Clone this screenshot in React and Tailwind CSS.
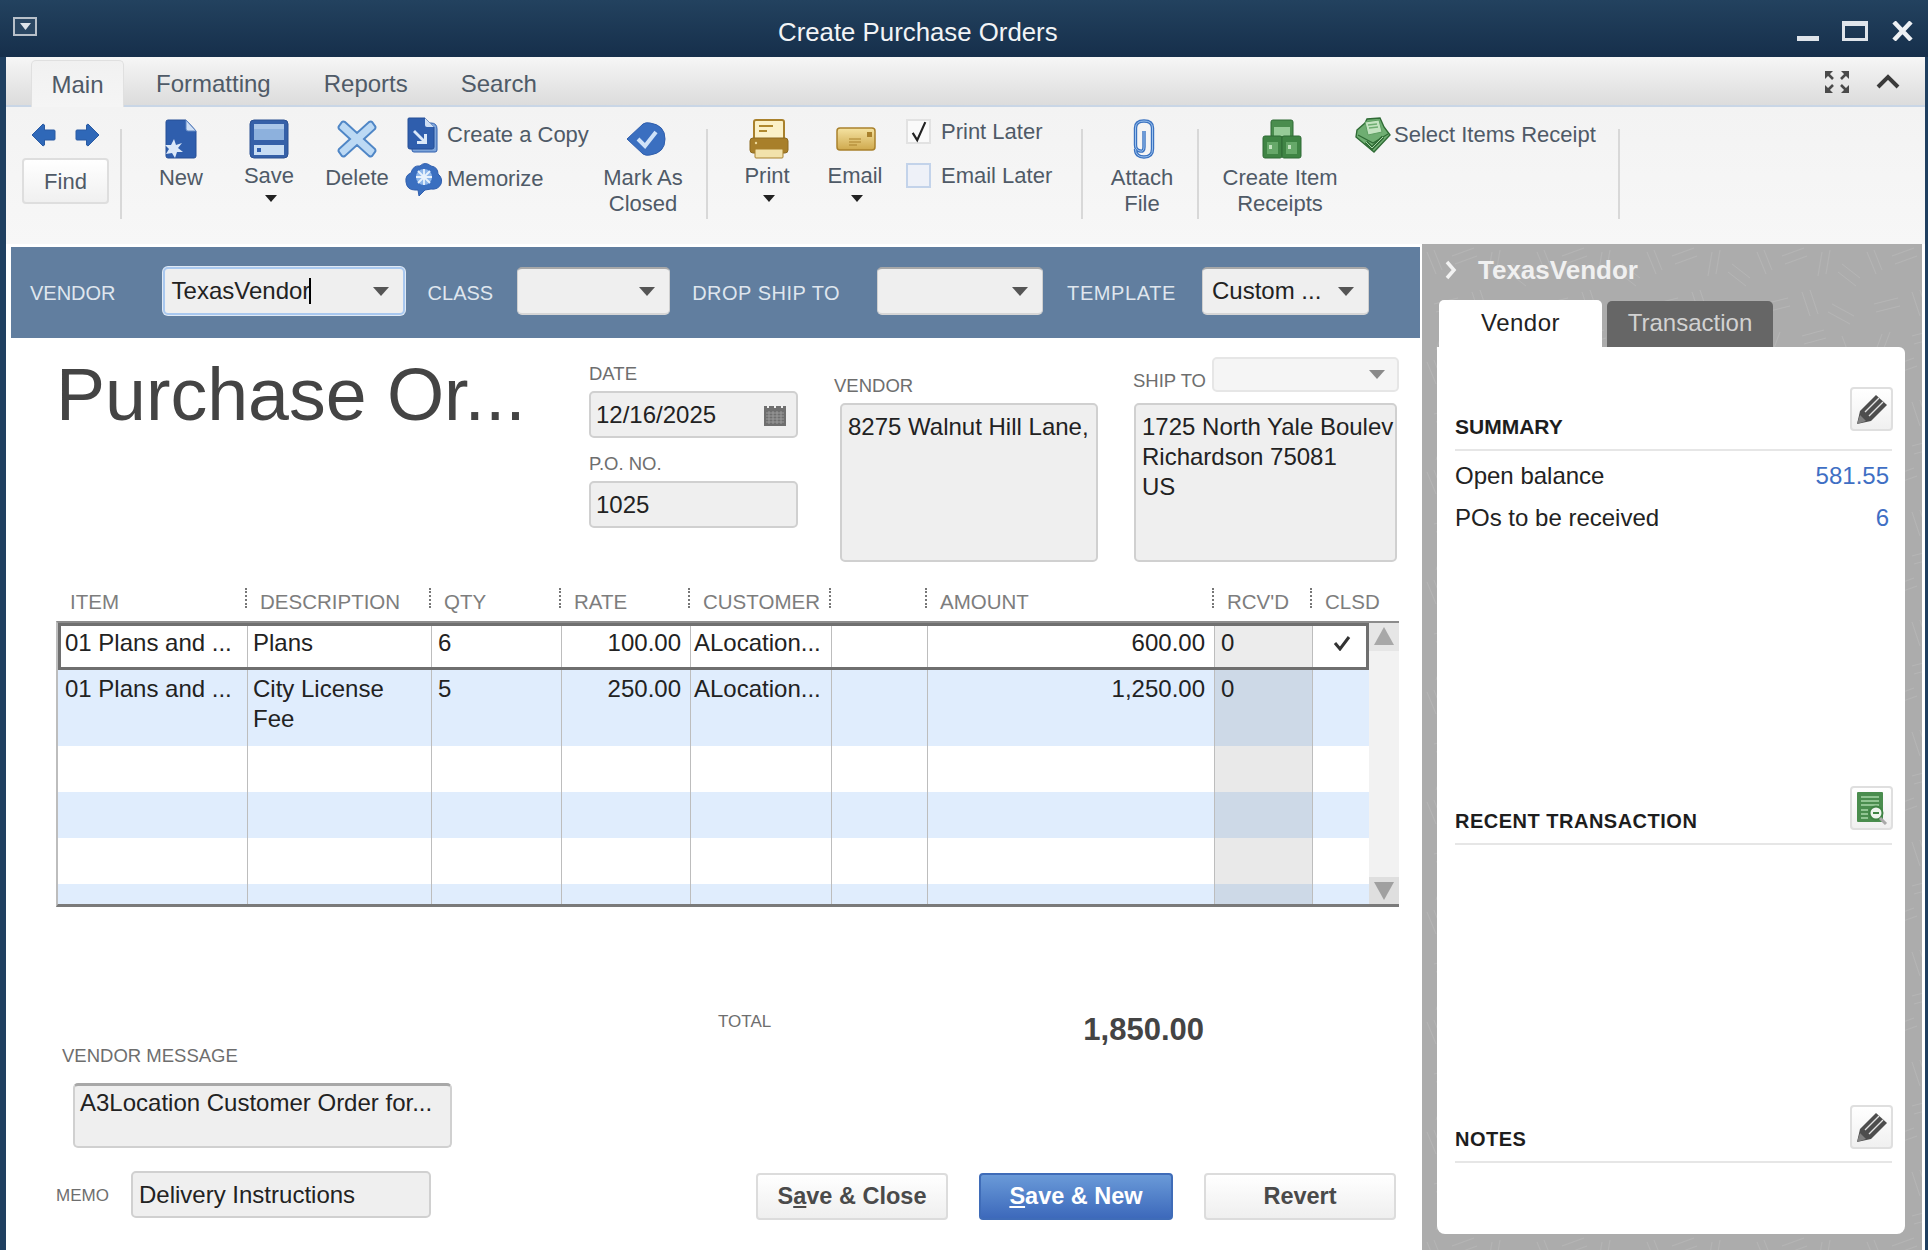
import React from "react";

/* ----------------------------- ICONS -------------------------------- */
const Tri = ({ className = "w-[16px] h-[9px]", fill = "#555" }) => (
  <svg viewBox="0 0 16 9" className={className} preserveAspectRatio="none">
    <polygon points="0,0 16,0 8,9" fill={fill} />
  </svg>
);

const ArrowIcon = ({ flip }) => (
  <svg viewBox="0 0 25 24" className={`w-[25px] h-[24px] ${flip ? "-scale-x-100" : ""}`}>
    <path d="M1 12 L12 1 L13.5 2 V7 H23 Q24 7 24 8 V16 Q24 17 23 17 H13.5 V22 L12 23 Z" fill="#2f68b8" stroke="#2a5ba3" strokeWidth="1" />
  </svg>
);

const NewIcon = () => (
  <svg viewBox="0 0 32 40" className="w-[32px] h-[40px]">
    <path d="M3 1 H21 L31 12 V37 Q31 39 29 39 H3 Q1 39 1 37 V3 Q1 1 3 1 Z" fill="#2f5ead" stroke="#274f96" />
    <path d="M21 1 L31 12 H23 Q21 12 21 10 Z" fill="#cfdff4" stroke="#5f86c4" />
    <path d="M9 20 L11 26 L17 24 L13 29 L18 33 L12 33 L10 39 L7 34 L1 35 L4 30 L0 26 L6 26 Z" fill="#dbe8f8" />
  </svg>
);

const SaveIcon = () => (
  <svg viewBox="0 0 40 40" className="w-[40px] h-[40px]">
    <rect x="1" y="1" width="38" height="38" rx="4" fill="#3560a8" stroke="#2b5092" />
    <rect x="5" y="5" width="30" height="16" fill="#8db1dd" />
    <rect x="5" y="5" width="30" height="5" fill="#a9c6e8" />
    <rect x="5" y="26" width="30" height="10" fill="#c7dcf3" />
    <rect x="8" y="29" width="4" height="4" fill="#2f5ead" />
  </svg>
);

const DeleteIcon = () => (
  <svg viewBox="0 0 40 38" className="w-[40px] h-[38px]">
    <path d="M8 2 L20 13 L32 2 Q34 1 35 2 L38 6 Q39 7 38 9 L27 19 L38 29 Q39 31 38 32 L35 36 Q34 37 32 36 L20 25 L8 36 Q6 37 5 36 L2 32 Q1 31 2 29 L13 19 L2 9 Q1 7 2 6 L5 2 Q6 1 8 2 Z" fill="#bcd9f4" stroke="#4f86c6" strokeWidth="2" />
  </svg>
);

const CopyIcon = () => (
  <svg viewBox="0 0 32 36" className="w-[32px] h-[36px]">
    <path d="M5 6 H24 Q30 6 30 12 V33 Q30 35 28 35 H7 Q5 35 5 33 Z" fill="#7ea5da" stroke="#2f5ead" />
    <path d="M2 1 H18 L27 10 V30 Q27 32 25 32 H3 Q1 32 1 30 V2 Q1 1 2 1 Z" fill="#2f5ead" stroke="#274f96" />
    <path d="M18 1 L27 10 H20 Q18 10 18 8 Z" fill="#cfdff4" />
    <path d="M8 13 L17 22 V17 H20 V27 H10 V24 H15 L6 15 Z" fill="#dbe8f8" />
  </svg>
);

const MemorizeIcon = () => (
  <svg viewBox="0 0 38 36" className="w-[38px] h-[36px]">
    <path d="M10 29 Q2 29 1 21 Q0 14 6 12 Q8 4 15 5 Q20 0 26 5 Q33 6 33 13 Q38 17 36 23 Q33 29 26 28 L20 29 L14 35 L13 29 Z" fill="#3a6fc0" stroke="#2f5ead" />
    <circle cx="19" cy="16" r="8" fill="#8db6ea" />
    <path d="M19 8 V24 M11 16 H27 M13 10 L25 22 M25 10 L13 22" stroke="#e8f2fc" strokeWidth="1.8" />
  </svg>
);

const MarkClosedIcon = () => (
  <svg viewBox="0 0 40 34" className="w-[40px] h-[34px]">
    <path d="M1 17 L17 2 Q20 0 24 1 Q39 3 39 17 Q39 31 24 33 Q20 34 17 32 Z" fill="#3a6fc0" stroke="#2f5ead" />
    <path d="M12 17 L19 24 L30 10" fill="none" stroke="#cfe2f8" strokeWidth="4" />
  </svg>
);

const PrintIcon = () => (
  <svg viewBox="0 0 40 40" className="w-[40px] h-[40px]">
    <rect x="5" y="1" width="30" height="22" rx="2" fill="#fbf1c8" stroke="#a9812c" strokeWidth="2" />
    <path d="M10 7 H24 M10 12 H18" stroke="#b0892f" strokeWidth="2" />
    <rect x="1" y="19" width="38" height="15" rx="3" fill="#a87f2a" stroke="#8d6a20" />
    <circle cx="7" cy="24" r="1.2" fill="#ecd99a" />
    <rect x="6" y="30" width="28" height="9" rx="1" fill="#f2e2ab" stroke="#a9812c" />
  </svg>
);

const EmailIcon = () => (
  <svg viewBox="0 0 40 24" className="w-[40px] h-[24px]">
    <defs>
      <linearGradient id="mailg" x1="0" y1="0" x2="0" y2="1">
        <stop offset="0" stopColor="#f5e3a2" />
        <stop offset="1" stopColor="#cfa94d" />
      </linearGradient>
    </defs>
    <rect x="1" y="1" width="38" height="22" rx="3" fill="url(#mailg)" stroke="#a9812c" strokeWidth="1.5" />
    <rect x="31" y="5" width="5" height="5" fill="#a9812c" />
    <path d="M13 12 H25 M13 15 H25 M13 18 H21" stroke="#a9812c" strokeWidth="1.2" />
  </svg>
);

const ClipIcon = () => (
  <svg viewBox="0 0 24 40" className="w-[24px] h-[40px]">
    <path d="M12 12 V28 Q12 33 8 32 Q3.5 31 3.5 26 V9 Q3.5 2 12 2 Q20.5 2 20.5 9 V30 Q20.5 38 12 38 Q3.5 38 3.5 30" fill="none" stroke="#3a72c0" strokeWidth="3.4" />
    <path d="M12 12 V28 Q12 33 8 32 Q3.5 31 3.5 26 V9 Q3.5 2 12 2 Q20.5 2 20.5 9 V30 Q20.5 38 12 38 Q3.5 38 3.5 30" fill="none" stroke="#9cc2ee" strokeWidth="1" />
  </svg>
);

const BoxesIcon = () => (
  <svg viewBox="0 0 40 40" className="w-[40px] h-[40px]">
    <rect x="9" y="1" width="22" height="18" rx="2" fill="#4a8d4e" stroke="#2f6b35" />
    <rect x="12" y="8" width="16" height="9" fill="#96cb97" />
    <rect x="1" y="17" width="19" height="22" rx="2" fill="#3f8444" stroke="#2f6b35" />
    <rect x="20" y="17" width="19" height="22" rx="2" fill="#3f8444" stroke="#2f6b35" />
    <rect x="5" y="23" width="11" height="12" fill="#66a869" />
    <rect x="24" y="23" width="11" height="12" fill="#66a869" />
    <rect x="7" y="26" width="3" height="4" fill="#c3e3c0" />
    <rect x="26" y="26" width="3" height="4" fill="#c3e3c0" />
  </svg>
);

const ReceiptIcon = () => (
  <svg viewBox="0 0 36 36" className="w-[36px] h-[36px]">
    <path d="M2 13 L10 6 L12 2 L25 1 L29 10 L35 18 L19 35 L1 20 Z" fill="#6fae72" stroke="#2f6b35" strokeWidth="1.4" />
    <path d="M10 5 L24 3 L27 15 L13 18 Z" fill="#c3e3c0" stroke="#5e9f62" />
    <path d="M13 8 L22 7 M14 11 L23 10" stroke="#6fae72" strokeWidth="1.4" />
    <path d="M3 18 L18 26 L33 17" fill="none" stroke="#2f6b35" strokeWidth="1.2" />
    <path d="M11 25 L17 31 L28 20" fill="none" stroke="#2f6b35" strokeWidth="3.4" />
    <path d="M11 25 L17 31 L28 20" fill="none" stroke="#a8d6a8" strokeWidth="1" />
  </svg>
);

const PencilIcon = () => (
  <svg viewBox="0 0 32 32" className="w-[32px] h-[32px]">
    <path d="M1 31 L4 18 L20 2 L31 12 L15 28 Z" fill="#4d4d4d" />
    <path d="M9 19 L23 5 M13 23 L27 9" stroke="#e4e4e4" strokeWidth="1.4" />
    <path d="M1 31 L4 22 L10 28 Z" fill="#808080" />
  </svg>
);

const RecentIcon = () => (
  <svg viewBox="0 0 32 34" className="w-[32px] h-[34px]">
    <rect x="1" y="1" width="26" height="30" rx="1" fill="#4a8d4e" />
    <path d="M5 6 H23 M5 10 H23 M5 14 H23 M5 19 H12 M5 23 H12 M5 27 H12" stroke="#a8d6a8" strokeWidth="1.3" />
    <circle cx="20" cy="22" r="6.5" fill="#eef5ee" stroke="#3f8444" strokeWidth="2" />
    <path d="M24 27 L30 33" stroke="#a9a9a9" strokeWidth="3" />
    <path d="M17 22 H23" stroke="#3f8444" strokeWidth="2" />
  </svg>
);

const CalendarIcon = () => (
  <svg viewBox="0 0 22 22" className="w-[22px] h-[22px]">
    <rect x="0" y="2" width="22" height="20" fill="#6f6f6f" />
    <path d="M4 0 V4 M11 0 V4 M18 0 V4" stroke="#f0f0f0" strokeWidth="2" />
    <path d="M2 9 H20 M2 12 H20 M2 15 H20 M2 18 H20 M5 7 V20 M9 7 V20 M13 7 V20 M17 7 V20" stroke="#9a9a9a" strokeWidth="1" />
  </svg>
);

const PanelTexture = () => (
  <svg className="absolute inset-0 w-full h-full">
    <defs>
      <pattern id="hatch" width="110" height="110" patternUnits="userSpaceOnUse">
        <path
          d="M5 8 L14 30 M12 6 L20 26 M30 12 L52 4 M33 20 L55 12 M70 8 L66 32 M78 6 L74 30 M90 20 L108 34 M86 28 L104 42 M12 60 L36 54 M14 68 L38 62 M50 48 L58 72 M58 46 L66 70 M80 60 L102 72 M76 68 L98 80 M20 90 L14 106 M28 88 L22 104 M50 92 L72 86 M52 100 L74 94 M90 92 L96 108"
          stroke="#b5b5b5"
          strokeWidth="1"
          fill="none"
        />
      </pattern>
    </defs>
    <rect width="100%" height="100%" fill="url(#hatch)" />
  </svg>
);

/* ----------------------------- SMALL BITS -------------------------------- */
const RibbonSep = () => <div className="w-[2px] h-[90px] mt-[22px] bg-[#d8d8d8] shrink-0" />;

const RibbonButton = ({ width, icon, lines, labelTop = "mt-[6px]", menu }) => (
  <div className={`${width} shrink-0 pt-[12px] flex flex-col items-center text-[22px] leading-[26px] text-[#4f5a67]`}>
    <div className="h-[40px] flex items-center justify-center">{icon}</div>
    <div className={`${labelTop} text-center`}>
      {lines.map((l) => (
        <div key={l}>{l}</div>
      ))}
    </div>
    {menu && (
      <div className="mt-[6px] ml-[4px]">
        <Tri className="w-[12px] h-[7px]" fill="#222" />
      </div>
    )}
  </div>
);

const SmallAction = ({ icon, label, className = "" }) => (
  <div className={`flex items-center text-[22px] leading-[26px] text-[#4f5a67] whitespace-nowrap ${className}`}>
    {icon}
    {label}
  </div>
);

const Check = ({ checked, label, className = "" }) => (
  <div className={`flex items-center gap-[10px] text-[22px] leading-[25px] text-[#4f5a67] ${className}`}>
    <div className={`w-[25px] h-[25px] flex items-center justify-center border-2 ${checked ? "border-[#e2e2e2] bg-[#fafafa]" : "border-[#c3d3ea] bg-[#eef1f8]"}`}>
      {checked && (
        <svg viewBox="0 0 20 24" className="w-[18px] h-[22px]">
          <path d="M3 13 L8 21 L17 1" fill="none" stroke="#222" strokeWidth="2.4" />
        </svg>
      )}
    </div>
    {label}
  </div>
);

const Combo = ({ width, children, focus }) => (
  <div className={`${width} h-[48px] -mt-[3px] shrink-0 rounded-[5px] bg-[#efefef] flex items-center justify-between pl-[7px] pr-[14px] text-[24px] text-[#222] ${focus ? "border-2 border-[#a9c8ef] shadow-[0_0_0_1px_#dfe9f5]" : "border-t-2 border-t-[#a8a8a8] border-x border-x-[#cfcfcf] border-b-2 border-b-[#d6d6d6]"}`}>
    <span className="flex items-center whitespace-nowrap">{children}</span>
    <Tri />
  </div>
);

const BarLabel = ({ className = "", children }) => (
  <span className={`text-[20px] text-[#dfe6ee] whitespace-nowrap shrink-0 ${className}`}>{children}</span>
);

const Label = ({ className = "", children }) => (
  <div className={`text-[18.5px] leading-[20px] text-[#6e6e6e] whitespace-nowrap ${className}`}>{children}</div>
);

const Field = ({ className = "", children }) => (
  <div className={`bg-[#efefef] border-2 border-[#d0d0d0] rounded-[5px] text-[24px] leading-[30px] text-[#222] ${className}`}>{children}</div>
);

const FootButton = ({ primary, width, children }) => (
  <div className={`${width} h-[47px] rounded-[4px] flex items-center justify-center text-[23.5px] font-bold ${primary ? "bg-gradient-to-b from-[#6a9ad8] to-[#3d69bb] border-2 border-[#3f6cb8] text-white" : "bg-gradient-to-b from-[#ffffff] to-[#efefef] border-2 border-[#dcdcdc] text-[#4a4a4a]"}`}>
    {children}
  </div>
);

const PanelHead = ({ title, height, titleClass, button }) => (
  <div className={`flex justify-between items-start border-b-2 border-[#e6e6e6] ${height}`}>
    <div className={`leading-[24px] font-bold text-[#1d1d1d] ${titleClass}`}>{title}</div>
    <div className="w-[43px] h-[44px] -mr-[1px] rounded-[4px] border-2 border-[#dfdfdf] bg-gradient-to-b from-white to-[#f0f0f0] flex items-center justify-center">
      {button}
    </div>
  </div>
);

/* ----------------------------- TABLE -------------------------------- */
const gridCols = "grid grid-cols-[190px_184px_130px_129px_141px_96px_287px_98px_57px]";

const headers = [
  { label: "ITEM", pad: "pl-[15px]" },
  { label: "DESCRIPTION", dots: true },
  { label: "QTY", dots: true },
  { label: "RATE", dots: true },
  { label: "CUSTOMER", dots: true },
  { label: "", dots: true },
  { label: "AMOUNT", dots: true },
  { label: "RCV'D", dots: true },
  { label: "CLSD", dots: true },
];

const rows = [
  { h: "h-[47px]", bg: "bg-white", rcvd: "bg-[#ececec]", pt: "pt-[5px]", item: "01 Plans and ...", desc: "Plans", qty: "6", rate: "100.00", cust: "ALocation...", amt: "600.00", rcv: "0", closed: true, selected: true },
  { h: "h-[76px]", bg: "bg-[#e0edfd]", rcvd: "bg-[#cdd9e7]", pt: "pt-[4px]", item: "01 Plans and ...", desc: "City License\nFee", qty: "5", rate: "250.00", cust: "ALocation...", amt: "1,250.00", rcv: "0" },
  { h: "h-[46px]", bg: "bg-white", rcvd: "bg-[#e9e9e9]" },
  { h: "h-[46px]", bg: "bg-[#e0edfd]", rcvd: "bg-[#cdd9e7]" },
  { h: "h-[46px]", bg: "bg-white", rcvd: "bg-[#e9e9e9]" },
  { h: "h-[23px]", bg: "bg-[#e0edfd]", rcvd: "bg-[#cdd9e7]" },
];

const cellBorder = "border-r border-[#bdbdbd]";

const GridRow = ({ r }) => (
  <div className={`${gridCols} ${r.h} ${r.bg} text-[24px] leading-[30px] text-[#222] ${r.selected ? "outline-[3px] -outline-offset-[3px] outline-[#6f6f6f] relative" : ""}`}>
    <div className={`${cellBorder} ${r.pt || ""} pl-[7px] whitespace-nowrap overflow-hidden`}>{r.item}</div>
    <div className={`${cellBorder} ${r.pt || ""} pl-[5px] whitespace-pre-line`}>{r.desc}</div>
    <div className={`${cellBorder} ${r.pt || ""} pl-[6px]`}>{r.qty}</div>
    <div className={`${cellBorder} ${r.pt || ""} pr-[9px] text-right`}>{r.rate}</div>
    <div className={`${cellBorder} ${r.pt || ""} pl-[3px] whitespace-nowrap overflow-hidden`}>{r.cust}</div>
    <div className={cellBorder} />
    <div className={`${cellBorder} ${r.pt || ""} pr-[9px] text-right`}>{r.amt}</div>
    <div className={`${cellBorder} ${r.rcvd} ${r.pt || ""} pl-[6px]`}>{r.rcv}</div>
    <div className="flex justify-center">
      {r.closed && (
        <svg viewBox="0 0 18 16" className="w-[18px] h-[16px] mt-[12px]">
          <path d="M2 8 L7 14 L16 2" fill="none" stroke="#333" strokeWidth="3" />
        </svg>
      )}
    </div>
  </div>
);

/* ----------------------------- APP -------------------------------- */
export default function App() {
  return (
    <div className="w-[1928px] h-[1250px] overflow-hidden flex flex-col bg-[#1f3f60] font-['Liberation_Sans',Arial,sans-serif]">
      {/* title bar */}
      <div className="h-[57px] shrink-0 flex items-center bg-gradient-to-b from-[#23425f] to-[#162f4b] pl-[13px] pr-[15px]">
        <div className="w-[24px] h-[19px] -mt-[5px] border-2 border-[#b8c0c9] bg-[#2b4763] flex items-center justify-center">
          <Tri className="w-[11px] h-[7px]" fill="#dfe4ea" />
        </div>
        <div className="ml-[741px] mt-[7px] text-[25.8px] text-[#f2f4f6] whitespace-nowrap">Create Purchase Orders</div>
        <div className="ml-auto flex items-center gap-[23px] mt-[4px]">
          <svg viewBox="0 0 22 20" className="w-[22px] h-[20px]">
            <rect x="0" y="15" width="22" height="5" fill="#dfe4ea" />
          </svg>
          <svg viewBox="0 0 26 20" className="w-[26px] h-[20px]">
            <rect x="1.5" y="2" width="23" height="16.5" fill="none" stroke="#dfe4ea" strokeWidth="3" />
            <rect x="0" y="0" width="26" height="5" fill="#dfe4ea" />
          </svg>
          <svg viewBox="0 0 21 20" className="w-[21px] h-[20px] ml-[1px]">
            <path d="M2 1 L19 19 M19 1 L2 19" stroke="#eef1f4" strokeWidth="4.5" />
          </svg>
        </div>
      </div>

      <div className="flex-1 ml-[6px] mr-[3px] bg-white flex flex-col">
        {/* tab bar */}
        <div className="h-[50px] shrink-0 flex items-end bg-gradient-to-b from-[#f6f6f6] to-[#dcdcdc] border-b-2 border-[#c9d6e6] text-[24px] text-[#4f5a67]">
          <div className="ml-[25px] w-[93px] h-[47px] pt-[1px] -mb-[2px] rounded-t-[5px] bg-gradient-to-b from-[#f1f1f1] to-[#f5f5f5] border-x border-t border-[#e0e0e0] flex items-center justify-center">Main</div>
          <div className="h-[47px] pt-[4px] flex items-center ml-[32px]">Formatting</div>
          <div className="h-[47px] pt-[4px] flex items-center ml-[53px]">Reports</div>
          <div className="h-[47px] pt-[4px] flex items-center ml-[53px]">Search</div>
          <div className="ml-auto h-[47px] flex items-center gap-[26px] pr-[25px] -mt-[2px]">
            <svg viewBox="0 0 26 24" className="w-[26px] h-[24px]">
              <path d="M2 2 L9 9 M24 2 L17 9 M2 22 L9 15 M24 22 L17 15" stroke="#4a4a4a" strokeWidth="2.6" />
              <path d="M1 9 V1 H9 Z M25 9 V1 H17 Z M1 15 V23 H9 Z M25 15 V23 H17 Z" fill="#4a4a4a" />
            </svg>
            <svg viewBox="0 0 24 15" className="w-[24px] h-[15px]">
              <path d="M2 13 L12 3 L22 13" fill="none" stroke="#3a3a3a" strokeWidth="4" />
            </svg>
          </div>
        </div>

        {/* ribbon */}
        <div className="h-[137px] shrink-0 flex items-start bg-gradient-to-b from-[#f3f3f3] to-[#f7f7f7]">
          <div className="w-[114px] shrink-0 pt-[16px]">
            <div className="flex gap-[19px] pl-[25px]">
              <ArrowIcon />
              <ArrowIcon flip />
            </div>
            <div className="ml-[16px] mt-[11px] w-[87px] h-[46px] rounded-[4px] border-2 border-[#dedede] bg-gradient-to-b from-white to-[#f0f0f0] flex items-center justify-center text-[22px] text-[#4f5a67]">Find</div>
          </div>
          <RibbonSep />
          <RibbonButton width="w-[88px] ml-[15px]" icon={<NewIcon />} lines={["New"]} />
          <RibbonButton width="w-[88px]" icon={<SaveIcon />} lines={["Save"]} labelTop="mt-[4px]" menu />
          <RibbonButton width="w-[88px]" icon={<DeleteIcon />} lines={["Delete"]} />
          <div className="w-[194px] ml-[4px] shrink-0 pt-[10px]">
            <SmallAction className="h-[36px]" icon={<div className="w-[42px] pl-[2px]"><CopyIcon /></div>} label="Create a Copy" />
            <SmallAction className="h-[36px] mt-[8px]" icon={<div className="w-[42px]"><MemorizeIcon /></div>} label="Memorize" />
          </div>
          <RibbonButton width="w-[88px]" icon={<div className="ml-[6px]"><MarkClosedIcon /></div>} lines={["Mark As", "Closed"]} />
          <div className="ml-[19px] flex">
            <RibbonSep />
          </div>
          <RibbonButton width="w-[88px] ml-[15px]" icon={<div className="ml-[3px]"><PrintIcon /></div>} lines={["Print"]} labelTop="mt-[4px]" menu />
          <RibbonButton width="w-[88px]" icon={<div className="ml-[2px]"><EmailIcon /></div>} lines={["Email"]} labelTop="mt-[4px]" menu />
          <div className="w-[175px] ml-[7px] shrink-0 pt-[12px]">
            <Check checked label="Print Later" />
            <Check label="Email Later" className="mt-[19px]" />
          </div>
          <RibbonSep />
          <RibbonButton width="w-[82px] ml-[18px]" icon={<div className="ml-[4px]"><ClipIcon /></div>} lines={["Attach", "File"]} />
          <div className="ml-[14px] flex">
            <RibbonSep />
          </div>
          <RibbonButton width="w-[120px] ml-[21px]" icon={<div className="ml-[4px]"><BoxesIcon /></div>} lines={["Create Item", "Receipts"]} />
          <div className="w-[263px] ml-[15px] shrink-0 pt-[10px]">
            <SmallAction className="h-[36px] gap-[3px]" icon={<ReceiptIcon />} label="Select Items Receipt" />
          </div>
          <RibbonSep />
        </div>

        <div className="flex-1 flex min-h-0">
          {/* left form */}
          <div className="w-[1416px] shrink-0 pl-[5px] pt-[3px] bg-white">
            <div className="w-[1409px] h-[91px] bg-[#617e9f] flex items-center pl-[19px]">
              <BarLabel>VENDOR</BarLabel>
              <div className="ml-[47px]">
                <Combo width="w-[242px]" focus>
                  TexasVendor
                  <span className="inline-block w-[2px] h-[26px] -ml-[1px] bg-black" />
                </Combo>
              </div>
              <BarLabel className="ml-[23px]">CLASS</BarLabel>
              <div className="ml-[24px]">
                <Combo width="w-[153px]" />
              </div>
              <BarLabel className="ml-[22px] tracking-[0.5px]">DROP SHIP TO</BarLabel>
              <div className="ml-[37px]">
                <Combo width="w-[166px]" />
              </div>
              <BarLabel className="ml-[24px] tracking-[0.6px]">TEMPLATE</BarLabel>
              <div className="ml-[26px]">
                <Combo width="w-[167px]">
                  <span className="ml-[2px]">Custom ...</span>
                </Combo>
              </div>
            </div>

            {/* form header */}
            <div className="h-[250px] flex">
              <div className="w-[578px] shrink-0 pl-[45px] pt-[17px] text-[73.5px] leading-[80px] text-[#444] whitespace-nowrap">Purchase Or...</div>
              <div className="w-[209px] shrink-0 pt-[26px]">
                <Label>DATE</Label>
                <Field className="mt-[7px] h-[47px] flex items-center justify-between pl-[5px] pr-[10px]">
                  12/16/2025
                  <CalendarIcon />
                </Field>
                <Label className="mt-[16px]">P.O. NO.</Label>
                <Field className="mt-[7px] h-[47px] flex items-center pl-[5px]">1025</Field>
              </div>
              <div className="w-[264px] ml-[36px] shrink-0 pt-[38px]">
                <Label>VENDOR</Label>
                <Field className="ml-[6px] mt-[7px] h-[159px] w-[258px] pl-[6px] pt-[7px] whitespace-nowrap">8275 Walnut Hill Lane,</Field>
              </div>
              <div className="w-[268px] ml-[35px] shrink-0 pt-[19px]">
                <div className="h-[35px] flex items-end">
                  <Label className="pb-[1px]">SHIP TO</Label>
                  <div className="ml-[6px] w-[187px] h-[35px] rounded-[5px] border-2 border-[#e6e6e6] bg-[#f5f5f5] flex items-center justify-end pr-[12px]">
                    <Tri fill="#8a8a8a" />
                  </div>
                </div>
                <Field className="ml-[1px] mt-[11px] h-[159px] w-[263px] pl-[6px] pt-[7px] whitespace-nowrap">
                  <div>1725 North Yale Boulev</div>
                  <div>Richardson 75081</div>
                  <div>US</div>
                </Field>
              </div>
            </div>

            {/* line items */}
            <div className="ml-[45px] w-[1343px]">
              <div className={`${gridCols} h-[33px] pl-[1px]`}>
                {headers.map((h) => (
                  <div key={h.label || "blank"} className="flex items-start -ml-[2px] h-[20px] overflow-visible">
                    {h.dots && <div className="w-[2px] h-[20px] shrink-0 border-l-2 border-dotted border-[#777]" />}
                    <div className={`${h.pad || "pl-[13px]"} text-[20.5px] leading-[28px] text-[#7d7d7d] whitespace-nowrap`}>{h.label}</div>
                  </div>
                ))}
              </div>
              <div className="flex h-[286px] border-t-2 border-b-[3px] border-t-[#8c8c8c] border-b-[#7a7a7a] border-l-2 border-l-[#bdbdbd]">
                <div className="w-[1311px] shrink-0 overflow-hidden">
                  {rows.map((r, i) => (
                    <GridRow key={i} r={r} />
                  ))}
                </div>
                <div className="w-[30px] shrink-0 flex flex-col justify-between bg-[#f2f2f2]">
                  <div className="h-[28px] bg-[#e6e6e6] flex justify-center pt-[4px]">
                    <Tri className="w-[20px] h-[18px] rotate-180" fill="#a8a8a8" />
                  </div>
                  <div className="h-[27px] bg-[#dfdfdf] flex justify-center pt-[5px]">
                    <Tri className="w-[20px] h-[18px]" fill="#a0a0a0" />
                  </div>
                </div>
              </div>
            </div>

            {/* footer */}
            <div className="flex h-[341px]">
              <div className="w-[707px] shrink-0 pl-[51px] pt-[139px]">
                <Label>VENDOR MESSAGE</Label>
                <Field className="ml-[11px] mt-[17px] w-[379px] h-[65px] pl-[5px] pt-[2px] border-t-[3px] border-t-[#a8a8a8] whitespace-nowrap">A3Location Customer Order for...</Field>
                <div className="flex items-center mt-[23px] -ml-[6px]">
                  <div className="w-[75px] mt-[3px] text-[17px] text-[#6e6e6e]">MEMO</div>
                  <Field className="w-[300px] h-[47px] pl-[6px] flex items-center">Delivery Instructions</Field>
                </div>
              </div>
              <div className="flex-1 pt-[105px]">
                <div className="flex items-start h-[44px]">
                  <div className="text-[17px] leading-[20px] text-[#6e6e6e]">TOTAL</div>
                  <div className="ml-auto mr-[218px] text-[31px] leading-[36px] font-bold text-[#444]">1,850.00</div>
                </div>
                <div className="flex gap-[31px] ml-[38px] mt-[117px]">
                  <FootButton width="w-[192px]">S<u>a</u>ve &amp; Close</FootButton>
                  <FootButton width="w-[194px]" primary><u>S</u>ave &amp; New</FootButton>
                  <FootButton width="w-[192px]">Revert</FootButton>
                </div>
              </div>
            </div>
          </div>

          {/* right panel */}
          <div className="w-[500px] shrink-0 relative bg-[#acacac]">
            <PanelTexture />
            <div className="relative h-full flex flex-col">
              <div className="h-[56px] shrink-0 flex items-center pl-[23px]">
                <svg viewBox="0 0 12 20" className="w-[12px] h-[20px] -mt-[4px]">
                  <path d="M2 2 L9 10 L2 18" fill="none" stroke="#f2f2f2" strokeWidth="3.5" />
                </svg>
                <div className="ml-[21px] -mt-[4px] text-[26px] font-bold text-[#f0f0f0]">TexasVendor</div>
              </div>
              <div className="h-[47px] shrink-0 flex items-end pl-[17px] gap-[5px] text-[24px]">
                <div className="w-[163px] h-[47px] pb-[2px] rounded-t-[5px] bg-white flex items-center justify-center text-[#222] tracking-[0.5px]">Vendor</div>
                <div className="w-[166px] h-[46px] pb-[2px] rounded-t-[5px] bg-[#666] flex items-center justify-center text-[#d2d2d2]">Transaction</div>
              </div>
              <div className="ml-[15px] w-[468px] h-[887px] rounded-b-[8px] rounded-tr-[6px] bg-white pl-[18px] pr-[13px] pt-[40px]">
                <div className="h-[399px]">
                  <PanelHead title="SUMMARY" height="h-[64px]" titleClass="text-[21px] pt-[28px]" button={<PencilIcon />} />
                  <div className="flex justify-between h-[42px] items-center mt-[4px] pr-[3px] text-[24px] text-[#222]">
                    Open balance
                    <span className="text-[#3f6fc4]">581.55</span>
                  </div>
                  <div className="flex justify-between h-[42px] items-center pr-[3px] text-[24px] text-[#222]">
                    POs to be received
                    <span className="text-[#3f6fc4]">6</span>
                  </div>
                </div>
                <div className="h-[319px]">
                  <PanelHead title="RECENT TRANSACTION" height="h-[59px]" titleClass="text-[20px] tracking-[0.5px] pt-[23px]" button={<RecentIcon />} />
                </div>
                <PanelHead title="NOTES" height="h-[58px]" titleClass="text-[20px] tracking-[0.5px] pt-[22px]" button={<PencilIcon />} />
              </div>
            </div>
          </div>
        </div>
      </div>
    </div>
  );
}
